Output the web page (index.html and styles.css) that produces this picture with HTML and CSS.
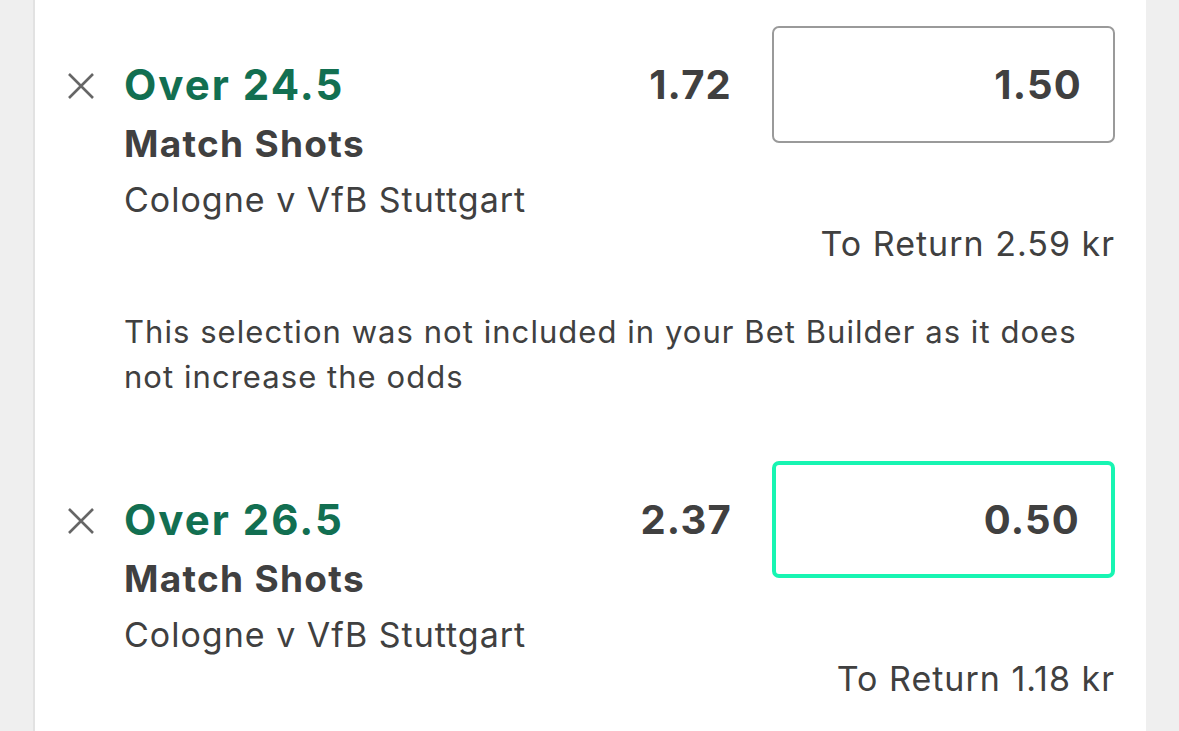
FILE: index.html
```html
<!DOCTYPE html>
<html lang="en">
<head>
<meta charset="utf-8">
<title>Bet Slip</title>
<link rel="stylesheet" href="styles.css">
</head>
<body>
<div class="page">
  <div class="card">
    <div class="bet">
      <div class="bet-main">
        <button class="remove" aria-label="Remove selection">
          <svg viewBox="0 0 28 28" width="28" height="28"><path d="M2 2 L26 26 M26 2 L2 26" stroke="#666666" stroke-width="2.6" fill="none"/></svg>
        </button>
        <div class="sel">
          <div class="sel-name">Over 24.5</div>
          <div class="sel-market">Match Shots</div>
          <div class="sel-event">Cologne v VfB Stuttgart</div>
        </div>
        <div class="odds">1.72</div>
        <div class="stake">1.50</div>
      </div>
      <div class="return">To Return 2.59 kr</div>
      <p class="note">This selection was not included in your Bet Builder as it does not increase the odds</p>
    </div>
    <div class="bet">
      <div class="bet-main">
        <button class="remove" aria-label="Remove selection">
          <svg viewBox="0 0 28 28" width="28" height="28"><path d="M2 2 L26 26 M26 2 L2 26" stroke="#666666" stroke-width="2.6" fill="none"/></svg>
        </button>
        <div class="sel">
          <div class="sel-name">Over 26.5</div>
          <div class="sel-market">Match Shots</div>
          <div class="sel-event">Cologne v VfB Stuttgart</div>
        </div>
        <div class="odds">2.37</div>
        <div class="stake stake-active">0.50</div>
      </div>
      <div class="return">To Return 1.18 kr</div>
    </div>
  </div>
</div>
</body>
</html>
```

FILE: styles.css
```css
html, body {
  margin: 0;
  padding: 0;
}
body {
  background: #efefef;
  font-family: Inter, "Noto Sans", sans-serif;
  color: #3f3f3f;
  height: 731px;
  overflow: hidden;
}
.page {
  padding: 0 33px;
  height: 100%;
}
.card {
  background: #ffffff;
  border-left: 2px solid #e2e2e2;
  height: 100%;
  padding: 0 31px 0 29px;
}
.bet {
  padding-top: 26px;
}
.bet-main {
  display: flex;
  align-items: flex-start;
}
.remove {
  width: 60px;
  margin: 46px 0 0 0;
  padding: 0 0 0 3px;
  border: 0;
  background: none;
  text-align: left;
  line-height: 0;
  flex: none;
}
.sel {
  flex: 1;
  margin-top: 34px;
}
.sel-name {
  font-size: 42px;
  line-height: 50px;
  font-weight: 700;
  letter-spacing: 2px;
  color: #126f51;
}
.sel-market {
  font-size: 37px;
  line-height: 56px;
  margin-top: 6px;
  font-weight: 700;
  letter-spacing: 1.3px;
  color: #404040;
}
.sel-event {
  font-size: 34px;
  line-height: 44px;
  margin-top: 6px;
  letter-spacing: 1px;
  color: #404040;
}
.odds {
  height: 117px;
  line-height: 117px;
  font-size: 40px;
  font-weight: 700;
  letter-spacing: 1.2px;
  margin-right: 40px;
  color: #404040;
}
.stake {
  width: 343px;
  height: 117px;
  box-sizing: border-box;
  border: 2px solid #9a9a9a;
  border-radius: 7px;
  text-align: right;
  padding-right: 31px;
  line-height: 113px;
  font-size: 40px;
  font-weight: 700;
  letter-spacing: 1.2px;
  color: #404040;
}
.stake-active {
  border: 4px solid #17f5b2;
  padding-right: 31px;
  line-height: 109px;
}
.return {
  text-align: right;
  font-size: 34px;
  line-height: 44px;
  letter-spacing: 1px;
  color: #404040;
}
.note {
  margin: 43px 0 0 60px;
  font-size: 31px;
  line-height: 45px;
  letter-spacing: 1.05px;
  color: #404040;
  padding-bottom: 36px;
}
```
